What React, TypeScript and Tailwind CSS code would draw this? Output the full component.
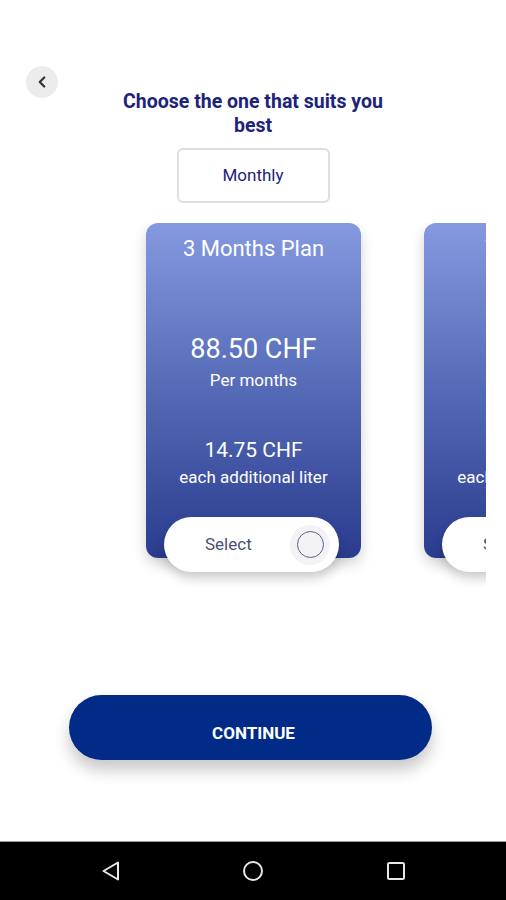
import { ChevronLeft } from "lucide-react";

type Plan = { title: string; price: string; extra: string };

const plans: Plan[] = [
  { title: "3 Months Plan", price: "88.50 CHF", extra: "14.75 CHF" },
  { title: "Year Plan", price: "79 CHF", extra: "12 CHF" },
];

const PlanCard = ({ plan }: { plan: Plan }) => (
  <div className="relative shrink-0 w-[215px] h-[335px] rounded-[12px] bg-gradient-to-b from-[#8499df] to-[#2b3c8e] shadow-[0_6px_14px_rgba(0,0,0,0.18)] text-white text-center flex flex-col">
    <div className="pt-[11px] text-[22px] leading-[30px]">{plan.title}</div>
    <div className="mt-[68px] text-[27px] leading-[34px]">{plan.price}</div>
    <div className="mt-[3px] text-[17px] leading-[22px]">Per months</div>
    <div className="mt-[45px] text-[21px] leading-[28px]">{plan.extra}</div>
    <div className="mt-[2px] text-[17px] leading-[22px]">each additional liter</div>
    <div className="absolute left-[18px] top-[294px] w-[175px] h-[55px] rounded-full bg-white shadow-[0_6px_12px_rgba(0,0,0,0.2)] flex items-center">
      <span className="ml-[41px] text-[17px] text-[#4a4f72]">Select</span>
      <div className="ml-auto mr-[9px] w-[40px] h-[40px] rounded-full bg-[#f3f3f5] flex items-center justify-center">
        <div className="w-[27px] h-[27px] rounded-full border-[1.5px] border-[#5b6090]" />
      </div>
    </div>
  </div>
);

export default function App() {
  return (
    <div className="h-[900px] w-[506px] bg-white flex flex-col overflow-hidden font-['Roboto',sans-serif]">
      <div className="pt-[66px] pl-[26px]">
        <button className="w-[32px] h-[32px] rounded-full bg-[#ececec] flex items-center justify-center text-[#333]">
          <ChevronLeft size={18} strokeWidth={3} />
        </button>
      </div>

      <h1 className="mt-[-8px] mx-auto w-[280px] text-center text-[19.5px] leading-[24px] font-bold text-[#1b2479]">
        Choose the one that suits you best
      </h1>

      <div className="mt-[10px] mx-auto w-[153px] h-[55px] rounded-[6px] border-2 border-[#dedede] flex items-center justify-center text-[17px] text-[#1b2479]">
        Monthly
      </div>

      <div className="mt-[20px] w-[486px] overflow-hidden">
        <div className="flex gap-[63px] pl-[146px] pb-[30px]">
          {plans.map((p) => (
            <PlanCard key={p.title} plan={p} />
          ))}
        </div>
      </div>

      <button className="mt-[107px] ml-[69px] w-[363px] h-[65px] pt-[13px] pl-[6px] rounded-full bg-[#022b88] shadow-[0_10px_16px_rgba(0,0,0,0.22)] text-white text-[17px] font-bold">
        CONTINUE
      </button>

      <div className="mt-auto h-[59px] bg-black border-t border-[#9a9a9a] relative">
        <svg className="absolute left-[99px] top-[17px]" width="24" height="24" viewBox="0 0 24 24" fill="none" stroke="#e8e8e8" strokeWidth="2" strokeLinejoin="round">
          <path d="M19 3.5 L19 20.5 L4.5 12 Z" />
        </svg>
        <svg className="absolute left-[241px] top-[17px]" width="24" height="24" viewBox="0 0 24 24" fill="none" stroke="#e8e8e8" strokeWidth="2">
          <circle cx="12" cy="12" r="9" />
        </svg>
        <svg className="absolute left-[384px] top-[17px]" width="24" height="24" viewBox="0 0 24 24" fill="none" stroke="#e8e8e8" strokeWidth="2">
          <rect x="4" y="4" width="16" height="16" rx="1.5" />
        </svg>
      </div>
    </div>
  );
}
